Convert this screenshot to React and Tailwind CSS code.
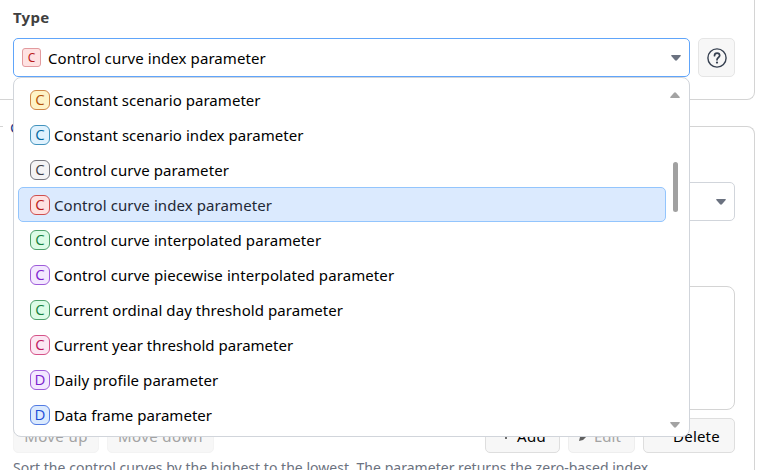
import React from 'react';

const options = [
  { letter: 'C', label: 'Constant scenario parameter', badge: 'bg-[#fef3c7] border-[#cf8748] text-[#b45309]', track: 'tracking-[0.04px]' },
  { letter: 'C', label: 'Constant scenario index parameter', badge: 'bg-[#e0f2fe] border-[#4293bd] text-[#0369a1]', track: 'tracking-[0.05px]' },
  { letter: 'C', label: 'Control curve parameter', badge: 'bg-[#f4f4f5] border-[#77777e] text-[#3f3f46]', track: 'tracking-[0.08px]' },
  { letter: 'C', label: 'Control curve index parameter', badge: 'bg-[#fee2e2] border-[#cf4e4e] text-[#b91c1c]', track: 'tracking-[0.09px]', selected: true },
  { letter: 'C', label: 'Control curve interpolated parameter', badge: 'bg-[#dcfce7] border-[#4d9f6a] text-[#15803d]', track: 'tracking-[0.09px]' },
  { letter: 'C', label: 'Control curve piecewise interpolated parameter', badge: 'bg-[#f3e8ff] border-[#9e5bd9] text-[#7e22ce]', track: 'tracking-[0.09px]' },
  { letter: 'C', label: 'Current ordinal day threshold parameter', badge: 'bg-[#dcfce7] border-[#4d9f6a] text-[#15803d]', track: 'tracking-[0.06px]' },
  { letter: 'C', label: 'Current year threshold parameter', badge: 'bg-[#fce7f3] border-[#d55288] text-[#be185d]', track: 'tracking-[0.02px]' },
  { letter: 'D', label: 'Daily profile parameter', badge: 'bg-[#f3e8ff] border-[#9e5bd9] text-[#7e22ce]', track: 'tracking-[0.07px]' },
  { letter: 'D', label: 'Data frame parameter', badge: 'bg-[#dbeafe] border-[#527be3] text-[#1d4ed8]', track: 'tracking-[0.03px]' },
];

function Arrow({ className, up }) {
  return (
    <svg viewBox="0 0 10 6" className={`h-[6px] w-[10px] shrink-0 ${className}`} fill="currentColor">
      <path d={up ? 'M0.8 6h8.4q1-.2.5-1L6 .7Q5 0 4 .7L.3 5q-.5.8.5 1Z' : 'M.8 0h8.4q1 .2.5 1L6 5.3Q5 6 4 5.3L.3 1Q-.2.2.8 0Z'} />
    </svg>
  );
}

function Option({ item }) {
  return (
    <div className={`flex h-[35px] items-center rounded-[5px] border pl-[11px] ${item.selected ? 'border-[#93c5fd] bg-[#dbeafe] text-[#1f2937]' : 'border-transparent text-black'}`}>
      <span className={`flex h-5 w-5 items-center justify-center rounded-[6px] border font-['Open_Sans','Noto_Sans',sans-serif] text-[15px] leading-none font-normal ${item.badge}`}>{item.letter}</span>
      <span className={`ml-1 whitespace-nowrap ${item.track}`}>{item.label}</span>
    </div>
  );
}

function Dropdown() {
  return (
    <div className="absolute top-[77px] left-[13px] z-10 flex h-[360px] w-[677px] rounded-lg border border-[#d1d5db] bg-white pt-1 pl-1">
      <div className="w-[648px]">
        {options.map((item) => <Option key={item.label} item={item} />)}
      </div>
      <div className="flex w-[18px] flex-col items-center pt-[10px]">
        <Arrow up className="text-[#a3a3a3]" />
        <div className="mt-16 h-[50px] w-[5px] rounded-full bg-[#a1a1a1]" />
        <Arrow className="mt-[210px] text-[#a3a3a3]" />
      </div>
    </div>
  );
}

export default function App() {
  return (
    <div className="relative h-[470px] w-[757px] overflow-hidden bg-white font-['Noto_Sans','Open_Sans',sans-serif] text-[15px] leading-5 text-black">
      <section className="h-[100px] w-[755px] rounded-br-lg border-r border-b border-[#d4d4d4] pt-[7px] pl-[13px]">
        <div className="text-[15px] font-bold tracking-[0.25px] text-[#404040]">Type</div>
        <div className="mt-[11px] flex gap-2">
          <div className="flex h-[39px] w-[677px] items-center rounded-[5px] border border-[#60a5fa] pr-2 pl-2">
            <span className="flex h-[19px] w-[19px] items-center justify-center rounded-[3px] border border-[#e29a9e] bg-[#fee2e2] text-[12px] leading-none text-[#b91c1c]">C</span>
            <span className="ml-[7px] flex-1 whitespace-nowrap tracking-[0.08px]">Control curve index parameter</span>
            <Arrow className="text-[#6b7280]" />
          </div>
          <button className="flex h-[39px] w-[37px] items-center justify-center rounded-[5px] border border-[#e5e5e5] bg-[#f7f7f7] text-[#374151]">
            <svg viewBox="0 0 20 20" className="h-5 w-5" fill="none" stroke="currentColor" strokeWidth="1.4" strokeLinecap="round">
              <circle cx="10" cy="10" r="9.1" />
              <path d="M7.5 7.7C7.5 4.2 12.7 4.3 12.7 7.6C12.7 9.5 10 9.6 10 11.8" strokeWidth="1.7" />
              <circle cx="10" cy="14.6" r="1.1" fill="currentColor" stroke="none" />
            </svg>
          </button>
        </div>
      </section>
      <section className="mt-[17px] h-[353px] w-[755px]">
        <div className="flex h-5 items-start">
          <div className="mt-[9px] h-px w-[3px] bg-[#d4d4d4]" />
          <span className="ml-[7px] w-[100px] text-[#1e3a8a]">C</span>
          <div className="mt-[9px] h-[11px] flex-1 rounded-tr-lg border-t border-r border-[#d4d4d4]" />
        </div>
        <div className="h-[333px] border-r border-[#d4d4d4] pt-[45px] pr-[19px] pl-[13px]">
          <div className="flex h-[39px] items-center justify-end rounded-[5px] border border-[#d1d5db] pr-2">
            <Arrow className="text-[#6b7280]" />
          </div>
          <div className="mt-[65px] h-[124px] rounded-lg border border-[#d4d4d4]" />
          <div className="mt-2 flex gap-2">
            <button className="h-[35px] w-[86px] rounded-[5px] border border-[#f3f3f3] bg-[#f7f7f7] tracking-[0.4px] text-[#a3a3a3]">Move up</button>
            <button className="h-[35px] w-[107px] rounded-[5px] border border-[#f3f3f3] bg-[#f7f7f7] tracking-[0.4px] text-[#a3a3a3]">Move down</button>
            <button className="ml-auto flex h-[35px] w-[75px] items-center rounded-[5px] border border-[#dedede] bg-[#f7f7f7] pl-[15px]">
              <svg viewBox="0 0 10 10" className="-mt-[2px] h-[10px] w-[10px]" stroke="#404040" strokeWidth="1.5"><path d="M5 1v8M1 5h8" /></svg>
              <span className="ml-[6px] tracking-[0.3px]">Add</span>
            </button>
            <button className="flex h-[35px] w-[67px] items-center rounded-[5px] border border-[#eeeeee] bg-[#f7f7f7] pl-[10px] text-[#a3a3a3]">
              <svg viewBox="0 0 10 10" className="h-[10px] w-[10px]" fill="#606060"><path d="M0 10L1 6L6 1L9 4L4 9ZM7 0L10 3L9.5 4L6 1Z" /></svg>
              <span className="ml-[5px]">Edit</span>
            </button>
            <button className="h-[35px] w-[92px] rounded-[5px] border border-[#dedede] bg-[#f7f7f7] pl-[15px] tracking-[0.2px]">Delete</button>
          </div>
          <div className="mt-[5px] whitespace-nowrap text-[14px] tracking-[0.03px] text-[#6b7280]">Sort the control curves by the highest to the lowest. The parameter returns the zero-based index</div>
        </div>
      </section>
      <Dropdown />
    </div>
  );
}
